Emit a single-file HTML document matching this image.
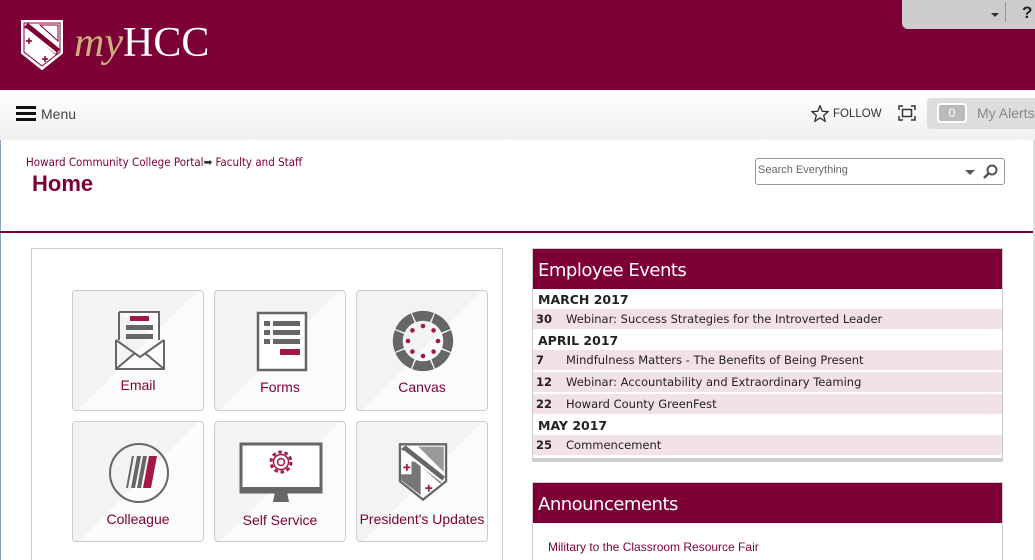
<!DOCTYPE html>
<html><head><meta charset="utf-8"><style>
*{margin:0;padding:0;box-sizing:border-box}
html,body{width:1035px;height:560px;overflow:hidden}
body{background:#fff;font-family:"Liberation Sans",sans-serif;position:relative}
.abs{position:absolute}
.hdr{left:0;top:0;width:1035px;height:90px;background:#7c0035}
.nav{left:0;top:90px;width:1035px;height:50px;background:linear-gradient(#fff,#f0f0f0)}
.tile{position:absolute;width:132px;height:121px;border:1px solid #ccc;border-radius:4px;background:linear-gradient(135deg,#f3f3f3 50%,#fbfbfb 50%)}
.tile span{position:absolute;left:0;right:0;text-align:center;color:#7c0035;font-size:14px}
.tile svg{position:absolute}
.ev{position:absolute;left:533px;width:469px;font-family:"DejaVu Sans",sans-serif;font-size:11.5px;color:#222}
.mo{height:19px;background:#fff;font-weight:bold;padding-left:5px;line-height:19px;font-size:12.5px;color:#222}
.row{height:22px;background:#f2e1e7;line-height:20px;border-bottom:2px solid #fff}
.row b{display:inline-block;width:33px;padding-left:3px}
</style></head><body>
<div class="abs hdr"></div>
<svg class="abs" style="left:20px;top:19px" width="44" height="52" viewBox="0 0 44 52"><path d="M2 2H42V34L22 50L2 34Z" fill="#fff" stroke="#fff" stroke-width="2"/><path d="M4 4H40V33L22 47L4 33Z" fill="none" stroke="#7c0035" stroke-width="1"/><path d="M4 8L8 4L40 30L36 36Z" fill="#7c0035"/><path d="M6 10L36 34" stroke="#fff" stroke-width="2"/><path d="M6 22h6M9 19v6M22 40h6M25 37v6" stroke="#7c0035" stroke-width="1.5"/><path d="M20 6H38V22Z" fill="none" stroke="#7c0035" stroke-width="1"/></svg>
<div class="abs" style="left:74px;top:20px;font-family:'Liberation Serif',serif;font-size:42px;color:#fff;line-height:46px"><i style="color:#c8b27a">my</i>HCC</div>
<div class="abs" style="left:902px;top:0;width:133px;height:29px;background:#ccc;border-radius:0 0 0 6px"></div>
<div class="abs" style="left:991px;top:13px;border:4px solid transparent;border-top:4px solid #333"></div>
<div class="abs" style="left:1005px;top:2px;width:1px;height:20px;background:#999"></div>
<div class="abs" style="left:1022px;top:3px;font-weight:bold;font-size:17px;color:#222">?</div>
<div class="abs nav"></div>
<div class="abs" style="left:16px;top:106px;width:20px;height:3px;background:#111;box-shadow:0 6px 0 #111,0 12px 0 #111"></div>
<div class="abs" style="left:41px;top:106px;font-size:14px;color:#444">Menu</div>
<svg class="abs" style="left:811px;top:105px" width="18" height="17" viewBox="0 0 24 23"><path d="M12 1L15 8.5L23 9L17 14L19 22L12 17.5L5 22L7 14L1 9L9 8.5Z" fill="none" stroke="#333" stroke-width="1.8"/></svg>
<div class="abs" style="left:833px;top:108px;font-size:11.5px;color:#333">FOLLOW</div>
<svg class="abs" style="left:898px;top:105px" width="18" height="16"><path d="M1 5V1H5M13 1H17V5M17 11V15H13M5 15H1V11" fill="none" stroke="#333" stroke-width="1.5"/><rect x="4.5" y="4.5" width="9" height="7" fill="none" stroke="#333" stroke-width="1.5"/></svg>
<div class="abs" style="left:927px;top:98px;width:108px;height:31px;background:#ddd;border-radius:4px 0 0 4px"></div>
<div class="abs" style="left:937px;top:103px;width:30px;height:20px;background:#bbb;border:2px solid #fff;border-radius:4px;color:#fff;font-size:12px;text-align:center;line-height:16px">0</div>
<div class="abs" style="left:977px;top:105px;font-size:14px;color:#888">My Alerts</div>
<div class="abs" style="left:0;top:140px;width:1px;height:420px;background:#8aa0b8"></div>
<div class="abs" style="left:26px;top:155px;font-size:11.5px;color:#7c0035;font-family:'DejaVu Sans Condensed','Liberation Sans Narrow',sans-serif">Howard Community College Portal<span style="color:#333">➡</span> Faculty and Staff</div>
<div class="abs" style="left:32px;top:171px;font-size:22px;font-weight:bold;color:#7c0035">Home</div>
<div class="abs" style="left:755px;top:158px;width:250px;height:27px;border:1px solid #999;border-radius:3px"></div>
<div class="abs" style="left:758px;top:164px;font-size:11px;color:#666">Search Everything</div>
<div class="abs" style="left:965px;top:170px;border:5px solid transparent;border-top:5px solid #555"></div>
<svg class="abs" style="left:983px;top:164px" width="15" height="15"><circle cx="9" cy="6" r="4.5" fill="none" stroke="#555" stroke-width="2"/><path d="M6 9L1 14" stroke="#555" stroke-width="2.5"/></svg>
<div class="abs" style="left:0;top:231px;width:1033px;height:2px;background:#7c0035"></div>
<div class="abs" style="left:31px;top:248px;width:472px;height:320px;border:1px solid #ccc"></div>

<div class="tile" style="left:72px;top:290px"><svg style="left:42px;top:19px" width="50" height="60" viewBox="0 0 50 60"><path d="M4 2H44V30M4 30V2" fill="#fff" stroke="#666" stroke-width="2"/><rect x="15" y="6" width="19" height="5" fill="#a3184a"/><rect x="11" y="15" width="27" height="5" fill="#666"/><rect x="11" y="24" width="27" height="5" fill="#666"/><path d="M1 30V59H49V30M1 30L25 47L49 30M1 59L20 43M49 59L30 43" fill="none" stroke="#666" stroke-width="2"/></svg><span style="top:86px">Email</span></div>
<div class="tile" style="left:214px;top:290px"><svg style="left:41px;top:20px" width="52" height="61"><rect x="2" y="2" width="48" height="57" fill="#fff" stroke="#666" stroke-width="2.5"/><rect x="8" y="10" width="6" height="5" fill="#666"/><rect x="17" y="10" width="27" height="5" fill="#666"/><rect x="8" y="19" width="6" height="5" fill="#666"/><rect x="17" y="19" width="27" height="5" fill="#666"/><rect x="8" y="28" width="6" height="5" fill="#666"/><rect x="17" y="28" width="27" height="5" fill="#666"/><rect x="24" y="38" width="20" height="6" fill="#a3184a"/></svg><span style="top:88px">Forms</span></div>
<div class="tile" style="left:356px;top:290px"><svg style="left:35px;top:19px" width="62" height="62" viewBox="-31 -31 62 62"><g fill="#666"><path id="p" d="M-11 -28A30 30 0 0 1 11 -28L7 -19A20 20 0 0 0 -7 -19Z"/><use href="#p" transform="rotate(45)"/><use href="#p" transform="rotate(90)"/><use href="#p" transform="rotate(135)"/><use href="#p" transform="rotate(180)"/><use href="#p" transform="rotate(225)"/><use href="#p" transform="rotate(270)"/><use href="#p" transform="rotate(315)"/></g><g fill="#a3184a"><circle cx="0" cy="-15" r="2.3"/><circle cx="0" cy="15" r="2.3"/><circle cx="15" cy="0" r="2.3"/><circle cx="-15" cy="0" r="2.3"/><circle cx="10.6" cy="10.6" r="2.3"/><circle cx="-10.6" cy="10.6" r="2.3"/><circle cx="10.6" cy="-10.6" r="2.3"/><circle cx="-10.6" cy="-10.6" r="2.3"/></g></svg><span style="top:88px">Canvas</span></div>

<div class="tile" style="left:72px;top:421px"><svg style="left:35px;top:20px" width="62" height="62"><circle cx="31" cy="31" r="29" fill="none" stroke="#666" stroke-width="2"/><path d="M18 46L24 14H26L20 46Z M23 46L29 14H33L27 46Z M29 46L35 14H39L33 46Z" fill="#666"/><path d="M35 46L41 14H49L43 46Z" fill="#a3184a"/></svg><span style="top:89px">Colleague</span></div>
<div class="tile" style="left:214px;top:421px"><svg style="left:24px;top:20px" width="84" height="62"><rect x="2" y="2" width="80" height="48" fill="#fff" stroke="#666" stroke-width="3"/><rect x="2" y="45" width="80" height="5" fill="#666"/><path d="M36 50H48L50 60H34Z" fill="#666"/><circle cx="42" cy="20" r="10" fill="none" stroke="#a3184a" stroke-width="3" stroke-dasharray="3.5 2.8"/><circle cx="42" cy="20" r="7.5" fill="none" stroke="#a3184a" stroke-width="1.5"/><circle cx="42" cy="20" r="3.5" fill="none" stroke="#a3184a" stroke-width="1.5"/></svg><span style="top:90px">Self Service</span></div>
<div class="tile" style="left:356px;top:421px"><svg style="left:40px;top:20px" width="52" height="60" viewBox="0 0 44 52"><path d="M2 2H42V34L22 50L2 34Z" fill="#fff" stroke="#666" stroke-width="2"/><path d="M18 4H40V26Z" fill="#999"/><path d="M3 17H20V46L3 33Z" fill="#777"/><path d="M3 17H12V28H3Z" fill="#fff"/><path d="M3 6L7 3L41 30L37 36Z" fill="#666"/><path d="M5 8L38 34" stroke="#fff" stroke-width="2"/><path d="M5 22h6M8 19v6M24 40h6M27 37v6" stroke="#a3184a" stroke-width="1.5"/></svg><span style="top:89px">President's Updates</span></div>

<div class="abs" style="left:532px;top:248px;width:471px;height:214px;border:1px solid #ccc;border-bottom:4px solid #ccc"></div>
<div class="abs" style="left:533px;top:249px;width:469px;height:40px;background:#7c0035;color:#fff;font-size:18px;line-height:44px;padding-left:5px;font-family:'DejaVu Sans',sans-serif;letter-spacing:-0.5px">Employee Events</div>
<div class="ev" style="top:290px">
<div class="mo">MARCH 2017</div>
<div class="row"><b>30</b>Webinar: Success Strategies for the Introverted Leader</div>
<div class="mo">APRIL 2017</div>
<div class="row"><b>7</b>Mindfulness Matters - The Benefits of Being Present</div>
<div class="row"><b>12</b>Webinar: Accountability and Extraordinary Teaming</div>
<div class="row"><b>22</b>Howard County GreenFest</div>
<div class="mo">MAY 2017</div>
<div class="row"><b>25</b>Commencement</div>
</div>
<div class="abs" style="left:532px;top:482px;width:471px;height:90px;border:1px solid #ccc"></div>
<div class="abs" style="left:533px;top:483px;width:469px;height:40px;background:#7c0035;color:#fff;font-size:18px;line-height:44px;padding-left:5px;font-family:'DejaVu Sans',sans-serif;letter-spacing:-0.5px">Announcements</div>
<div class="abs" style="left:548px;top:540px;font-size:12px;color:#7c0035">Military to the Classroom Resource Fair</div>
<div class="abs" style="left:1033px;top:140px;width:2px;height:420px;background:#ddd"></div>
</body></html>
